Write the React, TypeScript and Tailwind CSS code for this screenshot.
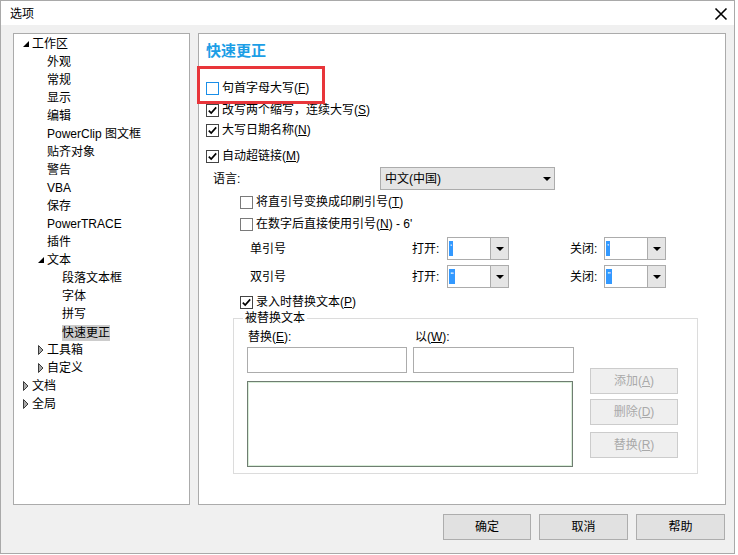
import React from "react";

const F = "font-['Liberation_Sans','Noto_Sans_CJK_SC',sans-serif]";

function ExpTri() {
  return (
    <svg width="6" height="6" viewBox="0 0 6 6">
      <polygon points="6,0 6,6 0,6" fill="#000" />
    </svg>
  );
}
function ColTri() {
  return (
    <svg width="6" height="10" viewBox="0 0 6 10">
      <polygon points="0.5,0.5 5,5 0.5,9.5" fill="#a8a8a8" stroke="#3a3a3a" strokeWidth="1" />
    </svg>
  );
}

type Node = { t: string; l: 0 | 1 | 2; tri?: "e" | "c"; sel?: boolean };
const tree: Node[] = [
  { t: "工作区", l: 0, tri: "e" },
  { t: "外观", l: 1 },
  { t: "常规", l: 1 },
  { t: "显示", l: 1 },
  { t: "编辑", l: 1 },
  { t: "PowerClip 图文框", l: 1 },
  { t: "贴齐对象", l: 1 },
  { t: "警告", l: 1 },
  { t: "VBA", l: 1 },
  { t: "保存", l: 1 },
  { t: "PowerTRACE", l: 1 },
  { t: "插件", l: 1 },
  { t: "文本", l: 1, tri: "e" },
  { t: "段落文本框", l: 2 },
  { t: "字体", l: 2 },
  { t: "拼写", l: 2 },
  { t: "快速更正", l: 2, sel: true },
  { t: "工具箱", l: 1, tri: "c" },
  { t: "自定义", l: 1, tri: "c" },
  { t: "文档", l: 0, tri: "c" },
  { t: "全局", l: 0, tri: "c" },
];
const plText = ["pl-[18px]", "pl-[33px]", "pl-[48px]"];
const plTri = ["pl-[9px]", "pl-[24px]", "pl-[39px]"];

function Check({ checked, hover }: { checked?: boolean; hover?: boolean }) {
  return (
    <span
      className={`w-[13px] h-[13px] border bg-white flex items-center justify-center shrink-0 ${
        hover ? "border-[#1a8ee8]" : checked ? "border-[#444444]" : "border-[#7a7a7a]"
      }`}
    >
      {checked && (
        <svg width="11" height="11" viewBox="0 0 11 11">
          <path d="M1.8 5.6 L4.2 8 L9.2 2.4" fill="none" stroke="#000" strokeWidth="1.7" />
        </svg>
      )}
    </span>
  );
}

function CheckRow({
  label,
  u,
  rest,
  checked,
  hover,
  cls,
}: {
  label: string;
  u: string;
  rest?: string;
  checked?: boolean;
  hover?: boolean;
  cls: string;
}) {
  return (
    <div className={`flex items-center ${cls}`}>
      <Check checked={checked} hover={hover} />
      <span className="ml-[3px] whitespace-nowrap">
        {label}(<u>{u}</u>){rest}
      </span>
    </div>
  );
}

function Arrow() {
  return (
    <svg width="8" height="4" viewBox="0 0 8 4">
      <polygon points="0,0 8,0 4,4" fill="#000" />
    </svg>
  );
}

function Combo({ glyph, wide }: { glyph: string; wide?: boolean }) {
  return (
    <div className="w-[62px] h-[23px] border border-[#acacac] bg-white flex shrink-0">
      <div className="flex-1 flex items-center pl-[1px]">
        <span
          className={`bg-[#3399ff] text-white h-[15px] text-[9px] leading-[13px] flex justify-center ${
            wide ? "w-[6px]" : "w-[4px]"
          }`}
        >
          {glyph}
        </span>
      </div>
      <div className="w-[18px] border-l border-[#acacac] bg-[#e5e5e5] flex items-center justify-center">
        <Arrow />
      </div>
    </div>
  );
}

function DisBtn({ label, u, cls }: { label: string; u: string; cls: string }) {
  return (
    <div
      className={`w-[88px] h-[26px] border border-[#cccccc] bg-[#efefef] text-[#a9a9a9] flex items-center justify-center ${cls}`}
    >
      {label}(<u>{u}</u>)
    </div>
  );
}

function Btn({ label, w }: { label: string; w: string }) {
  return (
    <div className={`${w} h-[26px] border border-[#adadad] bg-[#e1e1e1] flex items-center justify-center`}>
      {label}
    </div>
  );
}

export default function App() {
  return (
    <div className={`w-[738px] h-[555px] bg-white relative text-[12px] leading-[16px] text-black ${F}`}>
      <div className="w-[735px] h-[554px] border border-[#a9a9a9] flex flex-col bg-[#f0f0f0]">
        {/* title bar */}
        <div className="h-[24px] bg-white flex items-center justify-between pl-[9px] pr-[6px] shrink-0">
          <span className="mt-[1px]">选项</span>
          <svg width="14" height="14" viewBox="0 0 14 14" className="mt-[1px]">
            <path d="M1.5 1.5 L12.5 12.5 M12.5 1.5 L1.5 12.5" stroke="#000" strokeWidth="1.6" />
          </svg>
        </div>

        {/* body */}
        <div className="flex-1 flex flex-col pl-[12px] pr-[8px] pt-[8px]">
          <div className="flex h-[472px]">
            {/* tree */}
            <div className="w-[177px] h-full border border-[#ababab] bg-white pt-[1px]">
              {tree.map((n, i) => (
                <div key={i} className={`h-[18px] flex items-center ${n.tri ? plTri[n.l] : plText[n.l]}`}>
                  {n.tri && (
                    <span className="w-[9px] flex items-center">{n.tri === "e" ? <ExpTri /> : <ColTri />}</span>
                  )}
                  <span className={`whitespace-nowrap ${n.sel ? "bg-[#cccccc] h-[16px] mt-[2px]" : ""}`}>{n.t}</span>
                </div>
              ))}
            </div>

            {/* right panel */}
            <div className="ml-[8px] w-[528px] h-full border border-[#ababab] bg-white flex flex-col">
              <div className="h-[34px] flex items-center pl-[7px]">
                <span className="text-[15px] leading-[20px] font-semibold text-[#1c9ee6]">快速更正</span>
              </div>
              <CheckRow cls="h-[20px] mt-[10px] pl-[7px]" label="句首字母大写" u="F" hover />
              <CheckRow cls="h-[20px] mt-[2px] pl-[7px]" label="改写两个缩写，连续大写" u="S" checked />
              <CheckRow cls="h-[20px] pl-[7px]" label="大写日期名称" u="N" checked />
              <CheckRow cls="h-[20px] mt-[6px] pl-[7px]" label="自动超链接" u="M" checked />

              <div className="h-[23px] mt-[1px] flex items-center pl-[14px]">
                <span className="w-[167px]">语言:</span>
                <div className="w-[175px] h-[23px] border border-[#acacac] bg-[#e5e5e5] flex items-center justify-between pl-[4px] pr-[3px]">
                  <span>中文(中国)</span>
                  <Arrow />
                </div>
              </div>

              <CheckRow cls="h-[20px] mt-[2px] pl-[41px]" label="将直引号变换成印刷引号" u="T" />
              <CheckRow cls="h-[20px] mt-[2px] pl-[41px]" label="在数字后直接使用引号" u="N" rest=" - 6'" />

              <div className="h-[23px] mt-[3px] flex items-center pl-[51px]">
                <span className="w-[162px]">单引号</span>
                <span className="w-[35px]">打开:</span>
                <Combo glyph="‘" />
                <span className="w-[61px]" />
                <span className="w-[34px]">关闭:</span>
                <Combo glyph="’" />
              </div>
              <div className="h-[23px] mt-[5px] flex items-center pl-[51px]">
                <span className="w-[162px]">双引号</span>
                <span className="w-[35px]">打开:</span>
                <Combo glyph="“" wide />
                <span className="w-[61px]" />
                <span className="w-[34px]">关闭:</span>
                <Combo glyph="”" wide />
              </div>

              <CheckRow cls="h-[16px] mt-[6px] pl-[41px]" label="录入时替换文本" u="P" checked />

              <fieldset className="ml-[34px] w-[465px] border border-[#dcdcdc] pb-[6px]">
                <legend className="ml-[9px] px-[2px] leading-[16px]">被替换文本</legend>
                <div className="flex pl-[13px] mt-[1px]">
                  <div className="w-[327px] flex flex-col">
                    <div className="h-[20px] flex items-center">
                      <span className="w-[166px] pl-[1px]">
                        替换(<u>E</u>):
                      </span>
                      <span className="pl-[2px]">
                        以(<u>W</u>):
                      </span>
                    </div>
                    <div className="flex h-[26px]">
                      <div className="w-[160px] h-full border border-[#acacac] bg-white" />
                      <div className="ml-[6px] w-[161px] h-full border border-[#acacac] bg-white" />
                    </div>
                    <div className="mt-[8px] w-[326px] h-[86px] border border-[#6f7d71] bg-white shadow-[inset_0_0_0_1px_#d9eed9]" />
                  </div>
                  <div className="ml-[16px] flex flex-col pt-[41px]">
                    <DisBtn label="添加" u="A" cls="" />
                    <DisBtn label="删除" u="D" cls="mt-[5px]" />
                    <DisBtn label="替换" u="R" cls="mt-[7px]" />
                  </div>
                </div>
              </fieldset>
            </div>
          </div>

          {/* bottom buttons */}
          <div className="mt-[9px] flex justify-end gap-[8px] pr-[1px]">
            <Btn label="确定" w="w-[88px]" />
            <Btn label="取消" w="w-[89px]" />
            <Btn label="帮助" w="w-[89px]" />
          </div>
        </div>
      </div>

      {/* red annotation */}
      <div className="absolute left-[197px] top-[66px] w-[128px] h-[38px] border-[3px] border-[#e8353a]" />
    </div>
  );
}
